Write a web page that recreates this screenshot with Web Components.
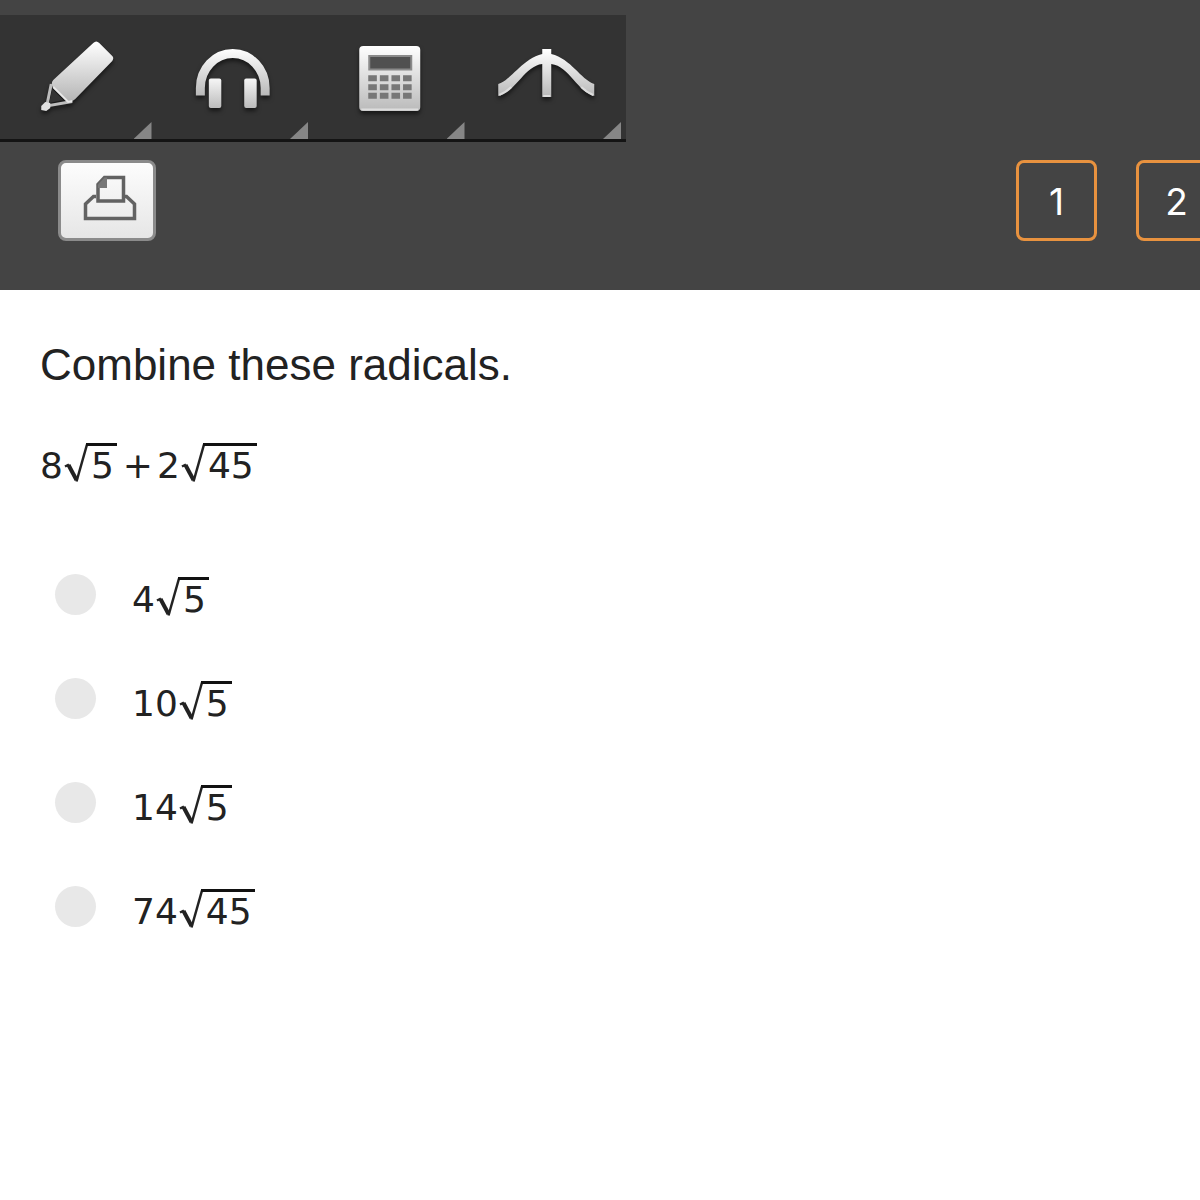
<!DOCTYPE html>
<html lang="en">
<head>
<meta charset="utf-8">
<meta name="viewport" content="width=device-width, initial-scale=1">
<title>Combine these radicals</title>
<style>
  html, body { margin: 0; background: #fff; }
  body { font-family: "Liberation Sans", Arial, sans-serif; color: #222; overflow-x: hidden; }
</style>
</head>
<body>
<quiz-app></quiz-app>

<template id="tool-button">
  <style>
    :host { display: block; flex: 1 1 0; min-width: 0; }
    button { position: relative; display: block; width: 100%; height: 124px; margin: 0; padding: 0; border: 0; background: none; cursor: pointer; }
    .corner { position: absolute; right: 5px; bottom: 0; width: 18px; height: 17px; background: #868686; clip-path: polygon(100% 0, 100% 100%, 0 100%); }
  </style>
  <button type="button"><slot></slot><span class="corner"></span></button>
</template>

<template id="tool-bar">
  <style>
    :host { display: flex; box-sizing: border-box; width: 626px; max-width: 100%; background: #333; border-bottom: 3px solid #141414; }
    svg { display: block; width: 100%; height: 124px; filter: drop-shadow(0 3px 2px rgba(0,0,0,.55)); }
  </style>
  <tool-button label="Pencil">
    <svg viewBox="0 15 156 124" aria-hidden="true">
      <defs><linearGradient id="g" x1="0" y1="0" x2="0" y2="1"><stop offset="0" stop-color="#fff"/><stop offset="1" stop-color="#b4b4b4"/></linearGradient></defs>
      <path d="M51 84 46.500 106 72 101.500" fill="none" stroke="#bdbdbd" stroke-width="3"/>
      <path d="M52 89 49 103 63 100Z" fill="#333"/>
      <path d="M93 43Q96 40 99 43L112 56Q114 58 112 61L75 99Q72 102 67 102L53 88Q50 83 53 80Z" fill="url(#g)"/>
      <path d="M53 87 68 102 72 101" fill="none" stroke="#e8e8e8" stroke-width="2"/>
      <path d="M45 102 50 103 50 108 46 111 41 110 41 106Z" fill="#e2e2e2"/>
    </svg>
  </tool-button>
  <tool-button label="Read aloud">
    <svg viewBox="156 15 157 124" aria-hidden="true">
      <defs><linearGradient id="h" gradientUnits="userSpaceOnUse" x1="0" y1="49" x2="0" y2="96"><stop offset="0" stop-color="#fff"/><stop offset="1" stop-color="#b8b8b8"/></linearGradient>
      <linearGradient id="h2" x1="0" y1="0" x2="0" y2="1"><stop offset="0" stop-color="#f6f6f6"/><stop offset="1" stop-color="#bcbcbc"/></linearGradient></defs>
      <path d="M199.500 95.500V88A32.500 34.500 0 0 1 264.500 88V95.500" fill="none" stroke="url(#h)" stroke-width="9"/>
      <rect x="208" y="78.500" width="12.500" height="29.500" rx="2" fill="url(#h2)"/>
      <rect x="243.500" y="78.500" width="12.500" height="29.500" rx="2" fill="url(#h2)"/>
    </svg>
  </tool-button>
  <tool-button label="Calculator">
    <svg viewBox="313 15 156 124" aria-hidden="true">
      <defs><linearGradient id="c" x1="0" y1="0" x2="0" y2="1"><stop offset="0" stop-color="#fff"/><stop offset="1" stop-color="#bababa"/></linearGradient></defs>
      <rect x="359" y="46" width="61" height="65" rx="4" fill="url(#c)"/>
      <path d="M361 109.500H418" stroke="#ddd" stroke-width="2"/>
      <rect x="369" y="56" width="42" height="13.500" fill="#505050" stroke="#8a8a8a" stroke-width="2"/>
      <g stroke="#777" stroke-width="6" stroke-dasharray="8.600 3"><path d="M368 78.200H411.500"/><path d="M368 87.200H411.500"/><path d="M368 95.800H411.500"/></g>
    </svg>
  </tool-button>
  <tool-button label="Graph">
    <svg viewBox="470 15 156 124" aria-hidden="true">
      <defs><linearGradient id="p" gradientUnits="userSpaceOnUse" x1="0" y1="50" x2="0" y2="97"><stop offset="0" stop-color="#fff"/><stop offset="1" stop-color="#b8b8b8"/></linearGradient></defs>
      <path d="M542 49H551V54C571 59 580 79 594 84V96C578 93 569 66 551 64V97H542V64C524 66 515 93 498 96V84C512 79 522 59 542 54Z" fill="url(#p)"/>
      <path d="M499 95Q506 92 511 87M593 95Q586 92 581 87M543 96H550" stroke="#ddd" stroke-width="2" fill="none"/>
    </svg>
  </tool-button>
</template>

<template id="print-button">
  <style>
    :host { display: block; }
    button { display: grid; place-items: center; box-sizing: border-box; width: 98px; height: 81px; margin: 0; padding: 0; border: 3px solid #8b8b8b; border-radius: 8px; background: linear-gradient(#fdfdfd, #e6e6e6); cursor: pointer; }
    svg { display: block; }
  </style>
  <button type="button" aria-label="Print">
    <svg width="92" height="75" viewBox="61 163 92 75" fill="none" stroke="#626262" stroke-width="3.500" aria-hidden="true">
      <path d="M96 196.500H93.500L85.500 204V218.500H134.500V204L126.500 196.500H124"/>
      <path d="M104.500 177.500H123.500V201H98V184.500Z"/>
      <path d="M98 184.500 104.500 177.500H107V188H98Z" fill="#777" stroke="none"/>
    </svg>
  </button>
</template>

<template id="page-nav">
  <style>
    :host { display: block; flex: 0 1 184px; overflow: hidden; }
    nav { display: flex; gap: 39px; }
    button { flex: none; box-sizing: border-box; width: 81px; height: 81px; margin: 0; padding: 2px 0 0; border: 3px solid #e8923f; border-radius: 8px; background: none; color: #fff; font: 37px/42px Inter, "Liberation Sans", sans-serif; text-align: center; cursor: pointer; }
  </style>
  <nav aria-label="Questions"><button type="button">1</button><button type="button">2</button></nav>
</template>

<template id="root-sign">
  <style>
    :host { display: inline-flex; align-items: flex-start; margin-left: 1px; }
    svg { display: block; flex: none; width: 22px; height: 40px; overflow: visible; }
    .radicand { border-top: 3px solid #111; line-height: 39px; padding: 0 3px 0 5px; }
  </style>
  <svg viewBox="0 0 22 40" fill="none" stroke="#222" role="img" aria-label="square root of">
    <path d="M1 23.500 5 21.500" stroke-width="2.500"/>
    <path d="M4.500 22 12.500 37" stroke-width="4"/>
    <path d="M12.500 38.500 23 1.500" stroke-width="2.500"/>
  </svg><span class="radicand"><slot></slot></span>
</template>

<template id="math-line">
  <style>
    :host { display: flex; align-items: flex-start; height: 44px; font: 36px/44px "DejaVu Sans", Verdana, sans-serif; color: #222; }
    ::slotted(span) { line-height: 45px; }
    ::slotted(.op) { margin: 0 4px 0 6px; }
  </style>
  <slot></slot>
</template>

<template id="answer-list">
  <style>
    :host { display: block; }
    fieldset { display: flex; flex-direction: column; gap: 57px; margin: 0; padding: 0; border: 0; min-width: 0; }
    label { display: flex; align-items: flex-start; gap: 36px; height: 47px; cursor: pointer; }
    input { appearance: none; flex: none; width: 41px; height: 41px; margin: 0; border-radius: 50%; background: #e8e8e8; }
    input:checked { background: radial-gradient(circle, #555 0 9px, #e8e8e8 10px); }
    math-line { margin-top: 3px; }
  </style>
  <fieldset aria-label="Answers">
    <label><input type="radio" name="answer"><math-line><span>4</span><root-sign>5</root-sign></math-line></label>
    <label><input type="radio" name="answer"><math-line><span>10</span><root-sign>5</root-sign></math-line></label>
    <label><input type="radio" name="answer"><math-line><span>14</span><root-sign>5</root-sign></math-line></label>
    <label><input type="radio" name="answer"><math-line><span>74</span><root-sign>45</root-sign></math-line></label>
  </fieldset>
</template>

<template id="quiz-app">
  <style>
    :host { display: block; }
    header { padding-top: 15px; background: #444; }
    .actions { display: flex; justify-content: space-between; padding: 18px 0 49px 58px; }
    main { padding: 50px 40px; }
    h1 { margin: 0 0 53px; font-size: 44px; line-height: 50px; font-weight: 400; }
    answer-list { margin: 87px 0 0 15px; }
  </style>
  <header>
    <tool-bar></tool-bar>
    <div class="actions"><print-button></print-button><page-nav></page-nav></div>
  </header>
  <main>
    <h1>Combine these radicals.</h1>
    <math-line><span>8</span><root-sign>5</root-sign><span class="op">+</span><span>2</span><root-sign>45</root-sign></math-line>
    <answer-list></answer-list>
  </main>
</template>

<script>
  class TemplateElement extends HTMLElement {
    constructor() {
      super();
      const template = document.getElementById(this.localName);
      this.attachShadow({ mode: "open" }).append(template.content.cloneNode(true));
    }
  }
  class ToolButton extends TemplateElement {
    connectedCallback() {
      this.shadowRoot.querySelector("button").setAttribute("aria-label", this.getAttribute("label") || "");
    }
  }
  customElements.define("tool-button", ToolButton);
  for (const name of ["tool-bar", "print-button", "page-nav", "root-sign", "math-line", "answer-list", "quiz-app"]) {
    customElements.define(name, class extends TemplateElement {});
  }
</script>
</body>
</html>
